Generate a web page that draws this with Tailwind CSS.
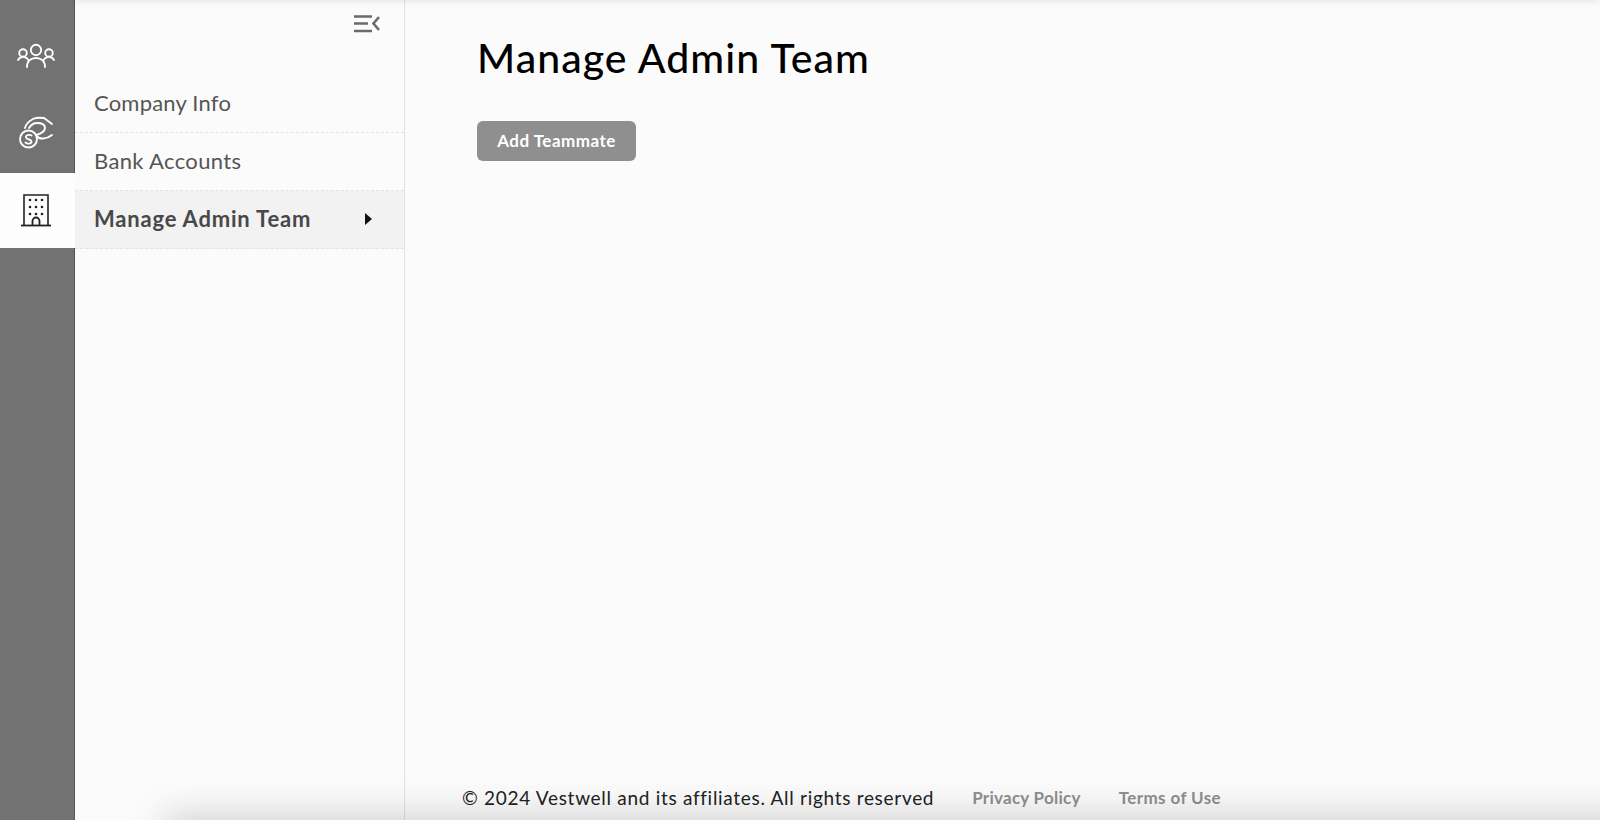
<!DOCTYPE html>
<html lang="en">
  <head>
    <meta charset="UTF-8" />
    <meta name="viewport" content="width=device-width, initial-scale=1.0" />
    <script src="https://cdn.jsdelivr.net/npm/@tailwindcss/browser@4"></script>
    <title>Manage Admin Team</title>
  </head>
  <body class="bg-[#fbfbfb] font-['Lato','Noto_Sans',sans-serif]">
    <div class="relative flex h-[820px] w-[1600px] overflow-hidden">
      <!-- icon rail -->
      <nav class="flex w-[75px] shrink-0 flex-col border-r border-[#555555] bg-[#727272]">
        <a class="flex h-[93px] items-center justify-center pt-[19px] pr-[2px]">
          <svg class="h-[26px] w-[40px]" viewBox="0 0 40 26" fill="none" stroke="#ffffff" stroke-width="1.9" stroke-linecap="round" stroke-linejoin="round">
            <circle cx="20" cy="7" r="5.200" />
            <circle cx="7" cy="10" r="3.800" />
            <circle cx="33" cy="10" r="3.800" />
            <path d="M11 24C11 18 15 15 20 15S29 18 29 24" />
            <path d="M2 17C4 14 7 13.500 8.500 14C10 14.500 11 15 12.500 17" />
            <path d="M38 17C36 14 33 13.500 31.500 14C30 14.500 29 15 27.500 17" />
          </svg>
        </a>
        <a class="flex h-[80px] items-center justify-center">
          <svg class="h-[34px] w-[36px]" viewBox="0 0 36 34" fill="none" stroke="#ffffff" stroke-width="1.900" stroke-linecap="round" stroke-linejoin="round">
            <circle cx="9.500" cy="23" r="8.500" />
            <path d="M33 8L25 2C20 1.500 16 2 14 3C10 5 7 8 6 12" />
            <path d="M10 12C12 9 15 7 18 7C23 7 26 9 26 12C26 15 22 18 17 19" />
            <path d="M18 20C20 24 28 23 33 19" />
            <path d="M12.500 19.500C11 18.500 7.500 18.500 7 20.500C6.500 22.500 8.500 23 10 23.500S13 25 12.300 26.500C11.500 28 8 28 6.500 26.500" />
          </svg>
        </a>
        <a class="mr-[-1px] flex h-[75px] items-center justify-center bg-[#fdfdfd] pr-[3px] pb-[1px]">
          <svg class="h-[34px] w-[32px]" viewBox="0 0 32 34" fill="none" stroke="#222222" stroke-width="1.600">
            <path d="M4 32V2h24v30" />
            <path d="M1 32.500h30" stroke-width="1.800" />
            <path d="M12.500 32v-4a3.500 3.500 0 0 1 7 0v4" stroke-width="1.800" />
            <g fill="#222222" stroke="none">
              <circle cx="10" cy="7" r="1.300" />
              <circle cx="16" cy="7" r="1.300" />
              <circle cx="22" cy="7" r="1.300" />
              <circle cx="10" cy="14" r="1.300" />
              <circle cx="16" cy="14" r="1.300" />
              <circle cx="22" cy="14" r="1.300" />
              <circle cx="10" cy="21" r="1.300" />
              <circle cx="16" cy="21" r="1.300" />
              <circle cx="22" cy="21" r="1.300" />
            </g>
          </svg>
        </a>
      </nav>

      <!-- section menu -->
      <aside class="w-[330px] shrink-0 border-r border-[#e2e2e2] text-[22px] text-[#555555]">
        <div class="flex h-[75px] items-start justify-end pt-[15px] pr-[24px]">
          <svg class="h-[18px] w-[26px]" viewBox="0 0 26 18" fill="none" stroke="#6b6b6b" stroke-width="2.600">
            <path d="M0 1.500h18M0 8.500h14M0 16h18" />
            <path d="M25 2l-5.500 6.500 5.500 6.500" />
          </svg>
        </div>
        <a class="flex h-[58px] items-center border-b border-dashed border-[#e2e2e2] px-[19px] pb-[2px] tracking-[0.2px]">Company Info</a>
        <a class="flex h-[58px] items-center border-b border-dashed border-[#e2e2e2] px-[19px] pb-[2px] tracking-[0.35px]">Bank Accounts</a>
        <a class="flex h-[58px] items-center justify-between border-b border-dashed border-[#e2e2e2] bg-[#f2f2f2] pr-[32px] pb-[2px] pl-[19px] font-bold tracking-[0.8px] text-[#484848]">
          Manage Admin Team
          <span class="h-0 w-0 border-y-[6px] border-l-[7px] border-y-transparent border-l-[#111111]"></span>
        </a>
      </aside>

      <!-- main content -->
      <main class="flex min-w-0 flex-1 flex-col pl-[72px]">
        <h1 class="mt-[32px] text-[41px] leading-[52px] font-medium tracking-[1.05px] text-black">Manage Admin Team</h1>
        <button class="mt-[37px] h-[40px] w-[159px] rounded-[6px] bg-[#8f8f8f] pb-[1px] text-[17px] font-bold tracking-[0.5px] text-white">Add Teammate</button>
        <footer class="mt-auto -ml-[15px] flex h-[36px] items-center pb-[8px] text-[19px]">
          <span class="tracking-[0.7px] text-[#222222]">© 2024 Vestwell and its affiliates. All rights reserved</span>
          <a class="ml-[38px] text-[17px] font-bold tracking-[0.25px] text-[#8f8f8f]">Privacy Policy</a>
          <a class="ml-[38px] text-[17px] font-bold tracking-[0.4px] text-[#8f8f8f]">Terms of Use</a>
        </footer>
      </main>

      <!-- edge shadows of the scroll area -->
      <div class="absolute top-[-10px] right-0 left-[75px] h-[10px] shadow-[0_0_8px_rgba(0,0,0,0.13)]"></div>
      <div class="absolute right-[-60px] bottom-[-40px] left-[165px] h-[40px] shadow-[0_0_40px_rgba(0,0,0,0.22)]"></div>
    </div>
  </body>
</html>
